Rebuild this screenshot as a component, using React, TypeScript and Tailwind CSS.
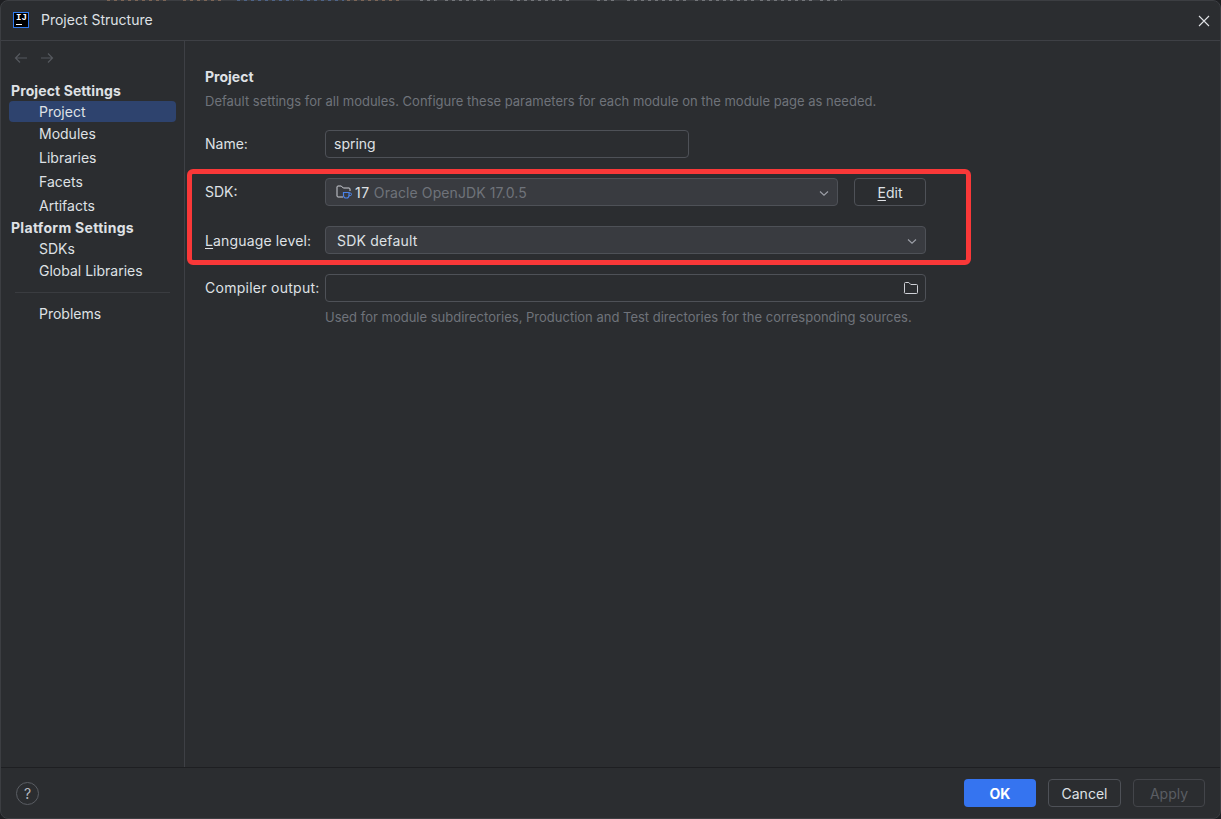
import React from "react";

function Chevron() {
  return (
    <svg width="12" height="12" viewBox="0 0 12 12" fill="none" className="shrink-0 mt-[1px]">
      <path d="M2 4.5 L6 8.2 L10 4.5" stroke="#9da0a8" strokeWidth="1.1" />
    </svg>
  );
}

function Folder({ stroke = "#ced0d6" }: { stroke?: string }) {
  return (
    <svg width="16" height="16" viewBox="0 0 16 16" fill="none" className="shrink-0">
      <path d="M1.5 12V3.5a1 1 0 0 1 1-1h3.3l2 2h5.7a1 1 0 0 1 1 1v7a1 1 0 0 1-1 1h-11a1 1 0 0 1-1-1.5Z" stroke={stroke} strokeWidth="1" />
    </svg>
  );
}

function SdkIcon() {
  return (
    <svg width="18" height="18" viewBox="0 0 18 18" fill="none" className="shrink-0">
      <path d="M8 14H3a1 1 0 0 1-1-1V4a1 1 0 0 1 1-1h3.3l2 2H14a1 1 0 0 1 1 1v2" stroke="#ced0d6" strokeWidth="1" />
      <path d="M8.5 9.5h5.5v3a2.5 2.5 0 0 1-2.5 2.5h-.5a2.5 2.5 0 0 1-2.5-2.5v-3Z" stroke="#4a82e8" strokeWidth="1.2" />
      <path d="M14 10h1.2a1 1 0 0 1 0 2.6H14" stroke="#4a82e8" strokeWidth="1" />
    </svg>
  );
}

function SideItem({ label, cls = "", active = false }: { label: string; cls?: string; active?: boolean }) {
  return (
    <div className={`h-[21px] pl-[30px] mx-[8px] rounded-[4px] flex items-center text-[14px] text-[#dfe1e5] ${active ? "bg-[#2e436e]" : ""} ${cls}`}>
      {label}
    </div>
  );
}

function Label({ children, cls = "" }: { children: React.ReactNode; cls?: string }) {
  return <div className={`w-[120px] shrink-0 text-[14px] text-[#dfe1e5] ${cls}`}>{children}</div>;
}

const sliver: [number, number, string][] = [
  [107, 62, "#b98b6a"],
  [183, 42, "#b98b6a"],
  [237, 57, "#5f87c9"],
  [300, 44, "#5f87c9"],
  [347, 54, "#b98b6a"],
  [420, 20, "#a9abb0"],
  [445, 50, "#a9abb0"],
  [510, 62, "#a9abb0"],
  [597, 20, "#a9abb0"],
  [627, 62, "#a9abb0"],
  [695, 60, "#a9abb0"],
  [760, 52, "#a9abb0"],
  [820, 22, "#a9abb0"],
];

export default function App() {
  return (
    <div
      className="relative w-[1221px] h-[819px] bg-[#1e1f22] overflow-hidden flex flex-col"
      style={{ fontFamily: "Inter, 'Noto Sans', sans-serif" }}
    >
      <div className="w-full h-full bg-[#2b2d30] rounded-[8px] border border-[#3c3e42] flex flex-col overflow-hidden">
        {/* Title bar */}
        <div className="h-[40px] shrink-0 flex items-center border-b border-[#3e4045] pl-[12px] pr-[9px] pb-[2px]">
          <div className="w-[16px] h-[16px] border border-[#2f7bf0] bg-black flex flex-col items-start pl-[2px] pt-[1px] shrink-0 overflow-hidden">
            <span className="text-[9px] leading-[8px] font-bold text-white" style={{ fontFamily: "'Liberation Mono', monospace" }}>IJ</span>
            <div className="w-[6px] h-[1px] bg-white mt-[2px]" />
          </div>
          <div className="ml-[12px] text-[14px] text-[#dfe1e5]">Project Structure</div>
          <div className="ml-auto pr-[1px] pt-[2px]">
            <svg width="12" height="12" viewBox="0 0 12 12" fill="none">
              <path d="M1 1 L11 11 M11 1 L1 11" stroke="#dfe1e5" strokeWidth="1.1" />
            </svg>
          </div>
        </div>

        {/* Body */}
        <div className="flex-1 flex min-h-0">
          <div className="w-[184px] shrink-0 border-r border-[#3e4045] flex flex-col">
            <div className="h-[33px] pl-[12px] flex items-center gap-[10px] pt-[1px] shrink-0">
              <svg width="16" height="16" viewBox="0 0 16 16" fill="none">
                <path d="M14 8H2.5 M7 3.5 L2.5 8 L7 12.5" stroke="#55585e" strokeWidth="1.2" />
              </svg>
              <svg width="16" height="16" viewBox="0 0 16 16" fill="none">
                <path d="M2 8H13.5 M9 3.5 L13.5 8 L9 12.5" stroke="#55585e" strokeWidth="1.2" />
              </svg>
            </div>
            <div className="pl-[10px] mt-[7px] h-[18px] flex items-center text-[14px] font-bold tracking-[0.1px] text-[#dfe1e5]">Project Settings</div>
            <SideItem label="Project" active cls="mt-[2px]" />
            <SideItem label="Modules" cls="mt-[1px]" />
            <SideItem label="Libraries" cls="mt-[3px]" />
            <SideItem label="Facets" cls="mt-[3px]" />
            <SideItem label="Artifacts" cls="mt-[3px]" />
            <div className="pl-[10px] mt-[2px] h-[18px] flex items-center text-[14px] font-bold tracking-[0.3px] text-[#dfe1e5]">Platform Settings</div>
            <SideItem label="SDKs" cls="mt-[2px]" />
            <SideItem label="Global Libraries" cls="mt-[1px]" />
            <div className="mx-[14px] h-px bg-[#3a3c40] mt-[11px]" />
            <SideItem label="Problems" cls="mt-[10px]" />
          </div>

          {/* Main */}
          <div className="flex-1 pl-[20px] pt-[27px] flex flex-col">
            <div className="text-[14px] leading-[17px] font-bold text-[#dfe1e5]">Project</div>
            <div className="text-[13px] leading-[16px] mt-[8px] text-[#6f737a]">
              Default settings for all modules. Configure these parameters for each module on the module page as needed.
            </div>

            <div className="flex items-center mt-[21px]">
              <Label cls="pb-[2px]">Name:</Label>
              <div className="w-[364px] h-[28px] rounded-[4px] border border-[#4e5157] flex items-center pl-[8px] pb-[2px] text-[14px] text-[#dfe1e5]">spring</div>
            </div>

            <div className="relative mt-[20px] w-[721px]">
              <div className="flex items-center">
                <Label cls="pb-[2px]">SDK:</Label>
                <div className="w-[513px] h-[28px] rounded-[4px] border border-[#4e5157] bg-[#393b40] flex items-center pl-[9px] pr-[7px] text-[14px]">
                  <SdkIcon />
                  <span className="ml-[2px] tracking-[0.6px] text-[#dfe1e5]">17</span>
                  <span className="ml-[4px] tracking-[0.1px] text-[#6f737a]">Oracle OpenJDK 17.0.5</span>
                  <span className="ml-auto"><Chevron /></span>
                </div>
                <div className="ml-[16px] w-[72px] h-[28px] rounded-[4px] border border-[#4e5157] flex items-center justify-center text-[14px] text-[#dfe1e5]">
                  <span><span className="underline underline-offset-2">E</span>dit</span>
                </div>
              </div>
              <div className="flex items-center mt-[20px]">
                <Label cls="tracking-[0.15px]"><span className="underline underline-offset-2">L</span>anguage level:</Label>
                <div className="w-[601px] h-[28px] rounded-[4px] border border-[#4e5157] bg-[#393b40] flex items-center pl-[11px] pr-[7px] text-[14px] tracking-[0.2px] text-[#dfe1e5]">
                  SDK default
                  <span className="ml-auto"><Chevron /></span>
                </div>
              </div>
              {/* highlight annotation over the form */}
              <div className="absolute left-[-18px] top-[-9px] w-[784px] h-[96px] border-[5px] border-[#f93838] rounded-[6px] pointer-events-none" />
            </div>

            <div className="flex items-center mt-[20px]">
              <Label cls="tracking-[0.27px] pb-[1px]">Compiler output:</Label>
              <div className="w-[601px] h-[28px] rounded-[4px] border border-[#4e5157] flex items-center justify-end pr-[6px]">
                <Folder />
              </div>
            </div>
            <div className="ml-[120px] mt-[7px] text-[13px] leading-[16px] text-[#6f737a]">
              Used for module subdirectories, Production and Test directories for the corresponding sources.
            </div>
          </div>
        </div>

        {/* Footer */}
        <div className="h-[51px] shrink-0 border-t border-[#1e1f22] flex items-center pl-[15px] pr-[15px]">
          <div className="w-[23px] h-[23px] rounded-full border border-[#5a5d63] flex items-center justify-center text-[14px] text-[#b4b8bf]">?</div>
          <div className="ml-auto flex items-center gap-[12px]">
            <div className="w-[72px] h-[28px] rounded-[4px] bg-[#3574f0] flex items-center justify-center text-[14px] font-bold text-white">OK</div>
            <div className="w-[73px] h-[28px] rounded-[4px] border border-[#4e5157] flex items-center justify-center text-[14px] text-[#dfe1e5]">Cancel</div>
            <div className="w-[72px] h-[28px] rounded-[4px] border border-[#43454a] flex items-center justify-center text-[14px] text-[#5a5d63]">Apply</div>
          </div>
        </div>
      </div>
      {/* window behind the dialog shows through on the top row */}
      <div className="absolute left-0 top-0 h-px w-full">
        {sliver.map(([x, w, c]) => (
          <div
            key={x}
            className="absolute top-0 h-px opacity-50"
            style={{
              left: x,
              width: w,
              backgroundImage: `repeating-linear-gradient(90deg, ${c} 0 3px, transparent 3px 7px)`,
            }}
          />
        ))}
      </div>
    </div>
  );
}
